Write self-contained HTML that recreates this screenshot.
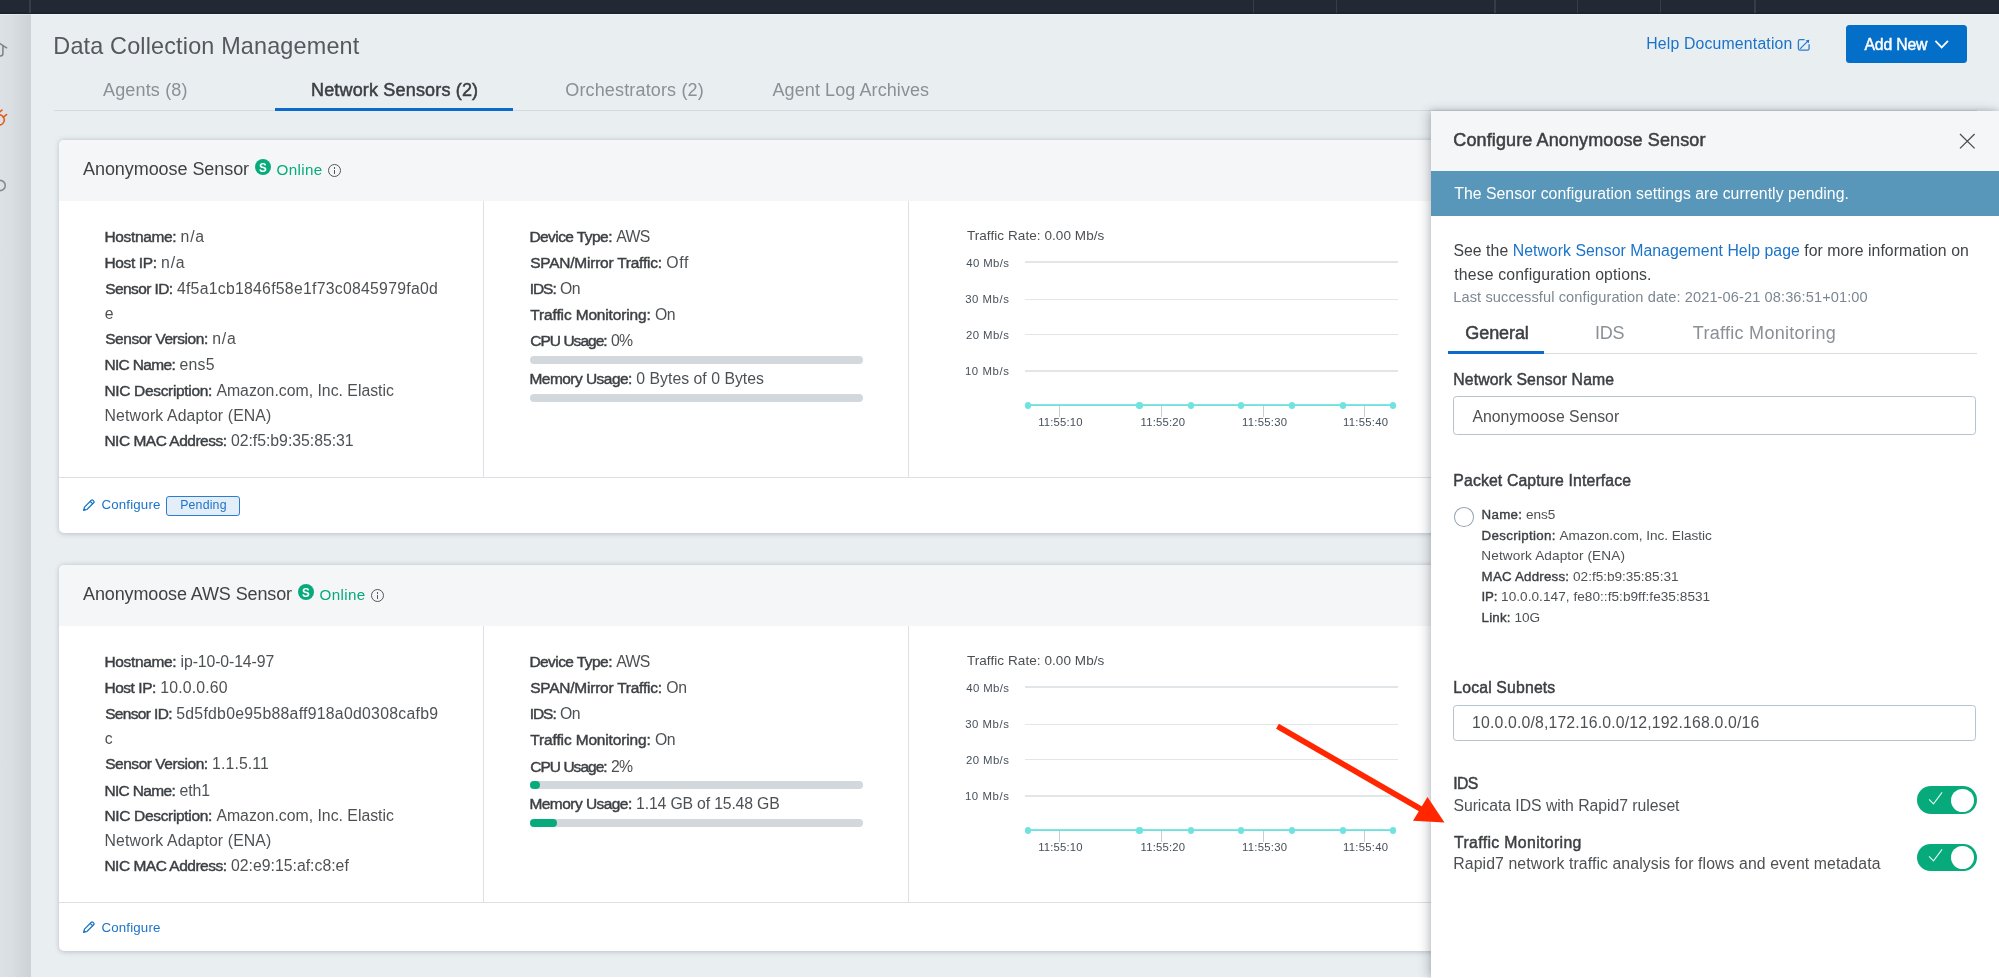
<!DOCTYPE html>
<html lang="en"><head><meta charset="utf-8"><title>Data Collection Management</title>
<style>
html,body{margin:0;padding:0}
body{width:1999px;height:978px;overflow:hidden;position:relative;background:#e9eef1;font-family:"Liberation Sans", sans-serif;}
.txt{position:absolute;left:0;top:0;width:1999px;height:978px;will-change:transform}
.t{position:absolute;white-space:nowrap}
.t b,.m{font-weight:normal;color:#3c3f43;-webkit-text-stroke:.029em #3c3f43}
.t b{font-size:98%}
.w{-webkit-text-stroke:.029em #fff}

</style></head><body>
<div class="shape">
<div style="position:absolute;left:0;top:0;width:1999px;height:13.5px;background:linear-gradient(#222934 0,#222934 11.6px,#1c222e 12.4px,#1c222e 100%)"></div>
<div style="position:absolute;left:30.6px;top:13.6px;width:1999px;height:1.3px;background:#f1f4f6"></div>
<div style="position:absolute;left:29.2px;top:0;width:1.6px;height:13px;background:#353d4a"></div>
<div style="position:absolute;left:1252.8px;top:0;width:1.6px;height:13px;background:#353d4a"></div>
<div style="position:absolute;left:1335.9px;top:0;width:1.6px;height:13px;background:#353d4a"></div>
<div style="position:absolute;left:1494.2px;top:0;width:1.6px;height:13px;background:#353d4a"></div>
<div style="position:absolute;left:1576.9px;top:0;width:1.6px;height:13px;background:#353d4a"></div>
<div style="position:absolute;left:1659.6000000000001px;top:0;width:1.6px;height:13px;background:#353d4a"></div>
<div style="position:absolute;left:1754.4px;top:0;width:1.6px;height:13px;background:#353d4a"></div>
<div style="position:absolute;left:0;top:13.5px;width:30.7px;height:965px;background:linear-gradient(90deg,#dbe1e4 0%,#d8dee1 38%,#d2d8db 66%,#cdd2d6 100%)"></div>
<div style="position:absolute;left:0;top:13.6px;width:30.7px;height:1.3px;background:rgba(255,255,255,.35)"></div>
<svg style="position:absolute;left:0;top:36px" width="12" height="26" viewBox="0 36 12 26"><path d="M-1.2 42.9 L6.6 47.8 M2.9 45.6 V53.4 Q2.9 55.9 0.4 55.9 H-1" fill="none" stroke="#7d838a" stroke-width="1.55" stroke-linecap="round"/></svg>
<svg style="position:absolute;left:0;top:104px" width="12" height="26" viewBox="0 104 12 26"><path d="M-1 112.5 L1.9 110.1 M-1.5 114.9 A5.06 5.06 0 1 1 -1.5 124.9 M3.1 117.3 L6.5 114.6" fill="none" stroke="#e8591c" stroke-width="1.6" stroke-linecap="round"/></svg>
<svg style="position:absolute;left:0;top:174px" width="12" height="24" viewBox="0 174 12 24"><circle cx="0.1" cy="185.5" r="5.15" fill="none" stroke="#858b92" stroke-width="1.6"/></svg>
<div style="position:absolute;left:0;top:976.9px;width:1999px;height:1.2px;background:#fff"></div>
<svg style="position:absolute;left:1794px;top:34px" width="20" height="20" viewBox="1794 34 20 20"><path d="M1804.1 39.7 H1800 Q1798.4 39.7 1798.4 41.3 V48.6 Q1798.4 50.2 1800 50.2 H1807.5 Q1809.1 50.2 1809.1 48.6 V44.7 M1800.5 48.4 L1807.6 41.4" fill="none" stroke="#2a7ccf" stroke-width="1.3" stroke-linecap="round"/><path d="M1809.3 39.8 L1805.7 40.5 L1808.7 43.3 Z" fill="#1a6fc6"/></svg>
<div style="position:absolute;left:1845.6px;top:25px;width:121.4px;height:38.4px;border-radius:3.5px;background:#036fc9"></div>
<svg style="position:absolute;left:1933px;top:38px" width="18" height="12" viewBox="0 0 18 12"><path d="M2.4 2.8 L8.7 9.4 L15 2.8" fill="none" stroke="#fff" stroke-width="1.7"/></svg>
<div style="position:absolute;left:54px;top:109.7px;width:1922.5px;height:1px;background:#d4dade"></div>
<div style="position:absolute;left:275px;top:107.7px;width:238.3px;height:3.3px;background:#0b6bcb"></div>
<div style="position:absolute;left:59.1px;top:139.5px;width:1917.4px;height:393.0px;background:#fff;border-radius:5px;box-shadow:0 .6px 5px rgba(50,65,80,.26)"></div>
<div style="position:absolute;left:59.1px;top:139.5px;width:1917.4px;height:61.0px;background:#f5f6f8;border-radius:5px 5px 0 0"></div>
<div style="position:absolute;left:59.1px;top:477.0px;width:1917.4px;height:1px;background:#dde1e6"></div>
<div style="position:absolute;left:482.75px;top:200.5px;width:1px;height:277.0px;background:#dde1e6"></div>
<div style="position:absolute;left:907.75px;top:200.5px;width:1px;height:277.0px;background:#dde1e6"></div>
<div style="position:absolute;left:254.7px;top:158.9px;width:16.1px;height:16.1px;border-radius:50%;background:#07ab7b"></div>
<div style="position:absolute;left:328.0px;top:163.8px;width:11.4px;height:11.4px;border-radius:50%;border:1.1px solid #50575f"></div>
<div style="position:absolute;left:334.3px;top:169.6px;width:1.1px;height:4.6px;background:#50575f"></div>
<div style="position:absolute;left:334.2px;top:167.3px;width:1.3px;height:1.3px;background:#50575f"></div>
<div style="position:absolute;left:530px;top:356.25px;width:332.5px;height:7.9px;border-radius:4px;background:#d3d8dc"></div>
<div style="position:absolute;left:530px;top:393.75px;width:332.5px;height:7.9px;border-radius:4px;background:#d3d8dc"></div>
<div style="position:absolute;left:1025px;top:261.3px;width:372.5px;height:1.4px;background:#e2e6e9"></div>
<div style="position:absolute;left:1025px;top:298.55px;width:372.5px;height:1.4px;background:#e2e6e9"></div>
<div style="position:absolute;left:1025px;top:333.8px;width:372.5px;height:1.4px;background:#e2e6e9"></div>
<div style="position:absolute;left:1025px;top:370.3px;width:372.5px;height:1.4px;background:#e2e6e9"></div>
<div style="position:absolute;left:1059.0px;top:405.5px;width:1px;height:11.4px;background:#c9cdd2"></div>
<div style="position:absolute;left:1161.25px;top:405.5px;width:1px;height:11.4px;background:#c9cdd2"></div>
<div style="position:absolute;left:1262.75px;top:405.5px;width:1px;height:11.4px;background:#c9cdd2"></div>
<div style="position:absolute;left:1363.75px;top:405.5px;width:1px;height:11.4px;background:#c9cdd2"></div>
<div style="position:absolute;left:1028px;top:404.1px;width:365px;height:2.1px;background:linear-gradient(#9eece9,#6ee1dd 45%,#6ee1dd)"></div>
<div style="position:absolute;left:1025.05px;top:402.3px;width:6.4px;height:6.4px;border-radius:50%;background:#6ee3df"></div>
<div style="position:absolute;left:1136.3px;top:402.3px;width:6.4px;height:6.4px;border-radius:50%;background:#6ee3df"></div>
<div style="position:absolute;left:1187.55px;top:402.3px;width:6.4px;height:6.4px;border-radius:50%;background:#6ee3df"></div>
<div style="position:absolute;left:1237.55px;top:402.3px;width:6.4px;height:6.4px;border-radius:50%;background:#6ee3df"></div>
<div style="position:absolute;left:1288.55px;top:402.3px;width:6.4px;height:6.4px;border-radius:50%;background:#6ee3df"></div>
<div style="position:absolute;left:1339.55px;top:402.3px;width:6.4px;height:6.4px;border-radius:50%;background:#6ee3df"></div>
<div style="position:absolute;left:1389.55px;top:402.3px;width:6.4px;height:6.4px;border-radius:50%;background:#6ee3df"></div>
<svg style="position:absolute;left:82px;top:498.15px" width="14" height="14" viewBox="0 0 14 14"><path d="M1.6 12.4 L2.5 9.1 L9.3 2.3 Q10.1 1.5 10.9 2.3 L11.7 3.1 Q12.5 3.9 11.7 4.7 L4.9 11.5 Z M8.2 3.4 L10.6 5.8" fill="none" stroke="#1a73c9" stroke-width="1.25" stroke-linejoin="round"/><path d="M1.6 12.4 L2.3 9.9 L4.1 11.7 Z" fill="#1a73c9"/></svg>
<div style="position:absolute;left:165.75px;top:495.75px;width:74px;height:20px;box-sizing:border-box;border:1.2px solid #2c7dd0;border-radius:3px;background:#e4eef9"></div>
<div style="position:absolute;left:59.1px;top:564.5px;width:1917.4px;height:386.5px;background:#fff;border-radius:5px;box-shadow:0 .6px 5px rgba(50,65,80,.26)"></div>
<div style="position:absolute;left:59.1px;top:564.5px;width:1917.4px;height:61.0px;background:#f5f6f8;border-radius:5px 5px 0 0"></div>
<div style="position:absolute;left:59.1px;top:902.0px;width:1917.4px;height:1px;background:#dde1e6"></div>
<div style="position:absolute;left:482.75px;top:625.5px;width:1px;height:277.0px;background:#dde1e6"></div>
<div style="position:absolute;left:907.75px;top:625.5px;width:1px;height:277.0px;background:#dde1e6"></div>
<div style="position:absolute;left:297.7px;top:583.9px;width:16.1px;height:16.1px;border-radius:50%;background:#07ab7b"></div>
<div style="position:absolute;left:371.0px;top:588.8px;width:11.4px;height:11.4px;border-radius:50%;border:1.1px solid #50575f"></div>
<div style="position:absolute;left:377.3px;top:594.6px;width:1.1px;height:4.6px;background:#50575f"></div>
<div style="position:absolute;left:377.2px;top:592.3px;width:1.3px;height:1.3px;background:#50575f"></div>
<div style="position:absolute;left:530px;top:781.25px;width:332.5px;height:7.9px;border-radius:4px;background:#d3d8dc"></div>
<div style="position:absolute;left:530px;top:781.25px;width:10px;height:7.9px;border-radius:4px;background:#07ab7b"></div>
<div style="position:absolute;left:530px;top:818.75px;width:332.5px;height:7.9px;border-radius:4px;background:#d3d8dc"></div>
<div style="position:absolute;left:530px;top:818.75px;width:26.75px;height:7.9px;border-radius:4px;background:#07ab7b"></div>
<div style="position:absolute;left:1025px;top:686.3px;width:372.5px;height:1.4px;background:#e2e6e9"></div>
<div style="position:absolute;left:1025px;top:723.55px;width:372.5px;height:1.4px;background:#e2e6e9"></div>
<div style="position:absolute;left:1025px;top:758.8px;width:372.5px;height:1.4px;background:#e2e6e9"></div>
<div style="position:absolute;left:1025px;top:795.3px;width:372.5px;height:1.4px;background:#e2e6e9"></div>
<div style="position:absolute;left:1059.0px;top:830.5px;width:1px;height:11.4px;background:#c9cdd2"></div>
<div style="position:absolute;left:1161.25px;top:830.5px;width:1px;height:11.4px;background:#c9cdd2"></div>
<div style="position:absolute;left:1262.75px;top:830.5px;width:1px;height:11.4px;background:#c9cdd2"></div>
<div style="position:absolute;left:1363.75px;top:830.5px;width:1px;height:11.4px;background:#c9cdd2"></div>
<div style="position:absolute;left:1028px;top:829.1px;width:365px;height:2.1px;background:linear-gradient(#9eece9,#6ee1dd 45%,#6ee1dd)"></div>
<div style="position:absolute;left:1025.05px;top:827.3px;width:6.4px;height:6.4px;border-radius:50%;background:#6ee3df"></div>
<div style="position:absolute;left:1136.3px;top:827.3px;width:6.4px;height:6.4px;border-radius:50%;background:#6ee3df"></div>
<div style="position:absolute;left:1187.55px;top:827.3px;width:6.4px;height:6.4px;border-radius:50%;background:#6ee3df"></div>
<div style="position:absolute;left:1237.55px;top:827.3px;width:6.4px;height:6.4px;border-radius:50%;background:#6ee3df"></div>
<div style="position:absolute;left:1288.55px;top:827.3px;width:6.4px;height:6.4px;border-radius:50%;background:#6ee3df"></div>
<div style="position:absolute;left:1339.55px;top:827.3px;width:6.4px;height:6.4px;border-radius:50%;background:#6ee3df"></div>
<div style="position:absolute;left:1389.55px;top:827.3px;width:6.4px;height:6.4px;border-radius:50%;background:#6ee3df"></div>
<svg style="position:absolute;left:82px;top:920.4px" width="14" height="14" viewBox="0 0 14 14"><path d="M1.6 12.4 L2.5 9.1 L9.3 2.3 Q10.1 1.5 10.9 2.3 L11.7 3.1 Q12.5 3.9 11.7 4.7 L4.9 11.5 Z M8.2 3.4 L10.6 5.8" fill="none" stroke="#1a73c9" stroke-width="1.25" stroke-linejoin="round"/><path d="M1.6 12.4 L2.3 9.9 L4.1 11.7 Z" fill="#1a73c9"/></svg>
<div style="position:absolute;left:1431px;top:111px;width:568px;height:867px;background:#fff;box-shadow:-3px 0 10px rgba(40,50,60,.24),0 -1px 5px rgba(40,50,60,.13)"></div>
<div style="position:absolute;left:1431px;top:111px;width:568px;height:60px;background:#f5f6f8"></div>
<div style="position:absolute;left:1431px;top:171px;width:568px;height:44.5px;background:#5897b9"></div>
<svg style="position:absolute;left:1957px;top:131px" width="20" height="20" viewBox="0 0 20 20"><path d="M3 3 L17.6 17.4 M17.6 3 L3 17.4" stroke="#484d53" stroke-width="1.25" fill="none"/></svg>
<div style="position:absolute;left:1447.5px;top:353.2px;width:529px;height:1px;background:#d9dee2"></div>
<div style="position:absolute;left:1447.5px;top:351.3px;width:96.5px;height:3.2px;background:#0b6bcb"></div>
<div style="position:absolute;left:1453.2px;top:396.4px;width:523.2px;height:38.6px;box-sizing:border-box;border:1.2px solid #b4c3d0;border-radius:3.5px;background:#fff"></div>
<div style="position:absolute;left:1453.75px;top:507px;width:20px;height:19.6px;box-sizing:border-box;border:1px solid #93a3b3;border-radius:50%;background:#fff"></div>
<div style="position:absolute;left:1453.2px;top:705.2px;width:523.2px;height:35.6px;box-sizing:border-box;border:1.2px solid #b4c3d0;border-radius:3.5px;background:#fff"></div>
<div style="position:absolute;left:1916.6px;top:786.2px;width:60px;height:27.7px;border-radius:14px;background:#07ab7b"></div>
<div style="position:absolute;left:1951px;top:788.9px;width:22.8px;height:22.8px;border-radius:50%;background:#fff"></div>
<svg style="position:absolute;left:1925px;top:790.5px" width="20" height="18" viewBox="0 0 20 18"><path d="M4.1 8.3 L8.5 12.9 L17.1 1.4" stroke="#fff" stroke-opacity=".88" stroke-width="1.15" fill="none"/></svg>
<div style="position:absolute;left:1916.6px;top:843.7px;width:60px;height:27.7px;border-radius:14px;background:#07ab7b"></div>
<div style="position:absolute;left:1951px;top:846.4px;width:22.8px;height:22.8px;border-radius:50%;background:#fff"></div>
<svg style="position:absolute;left:1925px;top:848px" width="20" height="18" viewBox="0 0 20 18"><path d="M4.1 8.3 L8.5 12.9 L17.1 1.4" stroke="#fff" stroke-opacity=".88" stroke-width="1.15" fill="none"/></svg>
<svg style="position:absolute;left:1260px;top:710px" width="200" height="130" viewBox="1260 710 200 130"><path d="M1277.5 726.25 L1422 809.8" stroke="#ff2600" stroke-width="5.7" fill="none"/><path d="M1444.5 822.5 L1427.5 797 L1413 820.75 Z" fill="#ff2600"/></svg>
</div>
<div class="txt">
<div class="t" style="left:53.37px;top:30px;line-height:32px;height:32px;font-size:23.4px;color:#55585c;letter-spacing:0.169px;">Data Collection Management</div>
<div class="t" style="left:1646.13px;top:32px;line-height:23px;height:23px;font-size:15.8px;color:#1a73c9;letter-spacing:0.183px;">Help Documentation</div>
<div class="t w" style="left:1864.52px;top:33px;line-height:23px;height:23px;font-size:15.8px;color:#fff;letter-spacing:-0.191px;">Add New</div>
<div class="t" style="left:103.01px;top:77px;line-height:26px;height:26px;font-size:18.0px;color:#8a9096;letter-spacing:0.166px;">Agents (8)</div>
<div class="t m" style="left:310.97px;top:77px;line-height:26px;height:26px;font-size:18.0px;color:#3c3f43;letter-spacing:0.171px;">Network Sensors (2)</div>
<div class="t" style="left:565.26px;top:77px;line-height:26px;height:26px;font-size:18.0px;color:#8a9096;letter-spacing:0.153px;">Orchestrators (2)</div>
<div class="t" style="left:772.51px;top:77px;line-height:26px;height:26px;font-size:18.0px;color:#8a9096;letter-spacing:0.088px;">Agent Log Archives</div>
<div class="t" style="left:83.01px;top:156px;line-height:26px;height:26px;font-size:18.0px;color:#404346;letter-spacing:-0.062px;">Anonymoose Sensor</div>
<div class="t w" style="left:258.50px;top:157px;line-height:21px;height:21px;font-size:13.2px;color:#fff;font-weight:bold;-webkit-text-stroke:0;transform:scaleX(.88);transform-origin:0 0;">S</div>
<div class="t" style="left:276.60px;top:158px;line-height:23px;height:23px;font-size:15.2px;color:#07ab7b;letter-spacing:0.341px;">Online</div>
<div class="t" style="left:104.45px;top:225px;line-height:23px;height:23px;font-size:15.8px;color:#4e5154;"><b style="letter-spacing:-0.342px">Hostname:</b> <span class="v" style="letter-spacing:0.800px">n/a</span></div>
<div class="t" style="left:104.45px;top:251px;line-height:23px;height:23px;font-size:15.8px;color:#4e5154;"><b style="letter-spacing:-0.348px">Host IP:</b> <span class="v" style="letter-spacing:0.800px">n/a</span></div>
<div class="t" style="left:105.20px;top:277px;line-height:23px;height:23px;font-size:15.8px;color:#4e5154;"><b style="letter-spacing:-0.576px">Sensor ID:</b> <span class="v" style="letter-spacing:0.263px">4f5a1cb1846f58e1f73c0845979fa0d</span></div>
<div class="t" style="left:104.65px;top:302px;line-height:23px;height:23px;font-size:15.8px;color:#4e5154;"><span class="v">e</span></div>
<div class="t" style="left:105.20px;top:327px;line-height:23px;height:23px;font-size:15.8px;color:#4e5154;"><b style="letter-spacing:-0.442px">Sensor Version:</b> <span class="v" style="letter-spacing:0.800px">n/a</span></div>
<div class="t" style="left:104.44px;top:353px;line-height:23px;height:23px;font-size:15.8px;color:#4e5154;"><b style="letter-spacing:-0.655px">NIC Name:</b> <span class="v" style="letter-spacing:0.301px">ens5</span></div>
<div class="t" style="left:104.44px;top:379px;line-height:23px;height:23px;font-size:15.8px;color:#4e5154;"><b style="letter-spacing:-0.316px">NIC Description:</b> <span class="v" style="letter-spacing:0.009px">Amazon.com, Inc. Elastic</span></div>
<div class="t" style="left:104.57px;top:404px;line-height:23px;height:23px;font-size:15.8px;color:#4e5154;letter-spacing:0.128px;"><span class="v">Network Adaptor (ENA)</span></div>
<div class="t" style="left:104.44px;top:429px;line-height:23px;height:23px;font-size:15.8px;color:#4e5154;"><b style="letter-spacing:-0.484px">NIC MAC Address:</b> <span class="v" style="letter-spacing:-0.013px">02:f5:b9:35:85:31</span></div>
<div class="t" style="left:529.45px;top:225px;line-height:23px;height:23px;font-size:15.8px;color:#4e5154;"><b style="letter-spacing:-0.558px">Device Type:</b> <span class="v" style="letter-spacing:-0.750px">AWS</span></div>
<div class="t" style="left:530.20px;top:251px;line-height:23px;height:23px;font-size:15.8px;color:#4e5154;"><b style="letter-spacing:-0.225px">SPAN/Mirror Traffic:</b> <span class="v" style="letter-spacing:0.680px">Off</span></div>
<div class="t" style="left:529.64px;top:277px;line-height:23px;height:23px;font-size:15.8px;color:#4e5154;"><b style="letter-spacing:-1.000px">IDS:</b> <span class="v" style="letter-spacing:-0.750px">On</span></div>
<div class="t" style="left:530.36px;top:303px;line-height:23px;height:23px;font-size:15.8px;color:#4e5154;"><b style="letter-spacing:-0.141px">Traffic Monitoring:</b> <span class="v" style="letter-spacing:-0.559px">On</span></div>
<div class="t" style="left:530.29px;top:329px;line-height:23px;height:23px;font-size:15.8px;color:#4e5154;"><b style="letter-spacing:-0.959px">CPU Usage:</b> <span class="v" style="letter-spacing:-0.750px">0%</span></div>
<div class="t" style="left:529.44px;top:367px;line-height:23px;height:23px;font-size:15.8px;color:#4e5154;"><b style="letter-spacing:-0.519px">Memory Usage:</b> <span class="v" style="letter-spacing:0.024px">0 Bytes of 0 Bytes</span></div>
<div class="t" style="left:966.91px;top:225px;line-height:21px;height:21px;font-size:13.5px;color:#4c4f52;letter-spacing:0.073px;">Traffic Rate: 0.00 Mb/s</div>
<div class="t" style="left:966.30px;top:254px;line-height:18px;height:18px;font-size:11.4px;color:#47505a;letter-spacing:0.337px;">40 Mb/s</div>
<div class="t" style="left:965.25px;top:290px;line-height:18px;height:18px;font-size:11.4px;color:#47505a;letter-spacing:0.512px;">30 Mb/s</div>
<div class="t" style="left:966.09px;top:326px;line-height:18px;height:18px;font-size:11.4px;color:#47505a;letter-spacing:0.372px;">20 Mb/s</div>
<div class="t" style="left:964.90px;top:362px;line-height:18px;height:18px;font-size:11.4px;color:#47505a;letter-spacing:0.569px;">10 Mb/s</div>
<div class="t" style="left:1038.21px;top:413px;line-height:18px;height:18px;font-size:11.3px;color:#47505a;letter-spacing:0.176px;">11:55:10</div>
<div class="t" style="left:1140.55px;top:413px;line-height:18px;height:18px;font-size:11.3px;color:#47505a;letter-spacing:0.180px;">11:55:20</div>
<div class="t" style="left:1241.92px;top:413px;line-height:18px;height:18px;font-size:11.3px;color:#47505a;letter-spacing:0.289px;">11:55:30</div>
<div class="t" style="left:1342.92px;top:413px;line-height:18px;height:18px;font-size:11.3px;color:#47505a;letter-spacing:0.289px;">11:55:40</div>
<div class="t" style="left:101.38px;top:494px;line-height:21px;height:21px;font-size:13.3px;color:#1a73c9;letter-spacing:0.173px;">Configure</div>
<div class="t" style="left:180.20px;top:495px;line-height:20px;height:20px;font-size:12.3px;color:#1a73c9;letter-spacing:0.194px;">Pending</div>
<div class="t" style="left:83.01px;top:581px;line-height:26px;height:26px;font-size:18.0px;color:#404346;letter-spacing:-0.118px;">Anonymoose AWS Sensor</div>
<div class="t w" style="left:301.50px;top:582px;line-height:21px;height:21px;font-size:13.2px;color:#fff;font-weight:bold;-webkit-text-stroke:0;transform:scaleX(.88);transform-origin:0 0;">S</div>
<div class="t" style="left:319.60px;top:583px;line-height:23px;height:23px;font-size:15.2px;color:#07ab7b;letter-spacing:0.341px;">Online</div>
<div class="t" style="left:104.45px;top:650px;line-height:23px;height:23px;font-size:15.8px;color:#4e5154;"><b style="letter-spacing:-0.340px">Hostname:</b> <span class="v" style="letter-spacing:-0.103px">ip-10-0-14-97</span></div>
<div class="t" style="left:104.45px;top:676px;line-height:23px;height:23px;font-size:15.8px;color:#4e5154;"><b style="letter-spacing:-0.445px">Host IP:</b> <span class="v" style="letter-spacing:0.158px">10.0.0.60</span></div>
<div class="t" style="left:105.20px;top:702px;line-height:23px;height:23px;font-size:15.8px;color:#4e5154;"><b style="letter-spacing:-0.645px">Sensor ID:</b> <span class="v" style="letter-spacing:0.273px">5d5fdb0e95b88aff918a0d0308cafb9</span></div>
<div class="t" style="left:104.66px;top:727px;line-height:23px;height:23px;font-size:15.8px;color:#4e5154;"><span class="v">c</span></div>
<div class="t" style="left:105.20px;top:752px;line-height:23px;height:23px;font-size:15.8px;color:#4e5154;"><b style="letter-spacing:-0.451px">Sensor Version:</b> <span class="v" style="letter-spacing:0.134px">1.1.5.11</span></div>
<div class="t" style="left:104.44px;top:779px;line-height:23px;height:23px;font-size:15.8px;color:#4e5154;"><b style="letter-spacing:-0.655px">NIC Name:</b> <span class="v" style="letter-spacing:-0.017px">eth1</span></div>
<div class="t" style="left:104.44px;top:804px;line-height:23px;height:23px;font-size:15.8px;color:#4e5154;"><b style="letter-spacing:-0.316px">NIC Description:</b> <span class="v" style="letter-spacing:0.009px">Amazon.com, Inc. Elastic</span></div>
<div class="t" style="left:104.57px;top:829px;line-height:23px;height:23px;font-size:15.8px;color:#4e5154;letter-spacing:0.128px;"><span class="v">Network Adaptor (ENA)</span></div>
<div class="t" style="left:104.44px;top:854px;line-height:23px;height:23px;font-size:15.8px;color:#4e5154;"><b style="letter-spacing:-0.484px">NIC MAC Address:</b> <span class="v" style="letter-spacing:0.012px">02:e9:15:af:c8:ef</span></div>
<div class="t" style="left:529.45px;top:650px;line-height:23px;height:23px;font-size:15.8px;color:#4e5154;"><b style="letter-spacing:-0.558px">Device Type:</b> <span class="v" style="letter-spacing:-0.750px">AWS</span></div>
<div class="t" style="left:530.20px;top:676px;line-height:23px;height:23px;font-size:15.8px;color:#4e5154;"><b style="letter-spacing:-0.225px">SPAN/Mirror Traffic:</b> <span class="v" style="letter-spacing:-0.320px">On</span></div>
<div class="t" style="left:529.64px;top:702px;line-height:23px;height:23px;font-size:15.8px;color:#4e5154;"><b style="letter-spacing:-1.000px">IDS:</b> <span class="v" style="letter-spacing:-0.750px">On</span></div>
<div class="t" style="left:530.36px;top:728px;line-height:23px;height:23px;font-size:15.8px;color:#4e5154;"><b style="letter-spacing:-0.141px">Traffic Monitoring:</b> <span class="v" style="letter-spacing:-0.559px">On</span></div>
<div class="t" style="left:530.29px;top:755px;line-height:23px;height:23px;font-size:15.8px;color:#4e5154;"><b style="letter-spacing:-0.961px">CPU Usage:</b> <span class="v" style="letter-spacing:-0.750px">2%</span></div>
<div class="t" style="left:529.44px;top:792px;line-height:23px;height:23px;font-size:15.8px;color:#4e5154;"><b style="letter-spacing:-0.531px">Memory Usage:</b> <span class="v" style="letter-spacing:-0.170px">1.14 GB of 15.48 GB</span></div>
<div class="t" style="left:966.91px;top:650px;line-height:21px;height:21px;font-size:13.5px;color:#4c4f52;letter-spacing:0.073px;">Traffic Rate: 0.00 Mb/s</div>
<div class="t" style="left:966.30px;top:679px;line-height:18px;height:18px;font-size:11.4px;color:#47505a;letter-spacing:0.337px;">40 Mb/s</div>
<div class="t" style="left:965.25px;top:715px;line-height:18px;height:18px;font-size:11.4px;color:#47505a;letter-spacing:0.512px;">30 Mb/s</div>
<div class="t" style="left:966.09px;top:751px;line-height:18px;height:18px;font-size:11.4px;color:#47505a;letter-spacing:0.372px;">20 Mb/s</div>
<div class="t" style="left:964.90px;top:787px;line-height:18px;height:18px;font-size:11.4px;color:#47505a;letter-spacing:0.569px;">10 Mb/s</div>
<div class="t" style="left:1038.21px;top:838px;line-height:18px;height:18px;font-size:11.3px;color:#47505a;letter-spacing:0.176px;">11:55:10</div>
<div class="t" style="left:1140.55px;top:838px;line-height:18px;height:18px;font-size:11.3px;color:#47505a;letter-spacing:0.180px;">11:55:20</div>
<div class="t" style="left:1241.92px;top:838px;line-height:18px;height:18px;font-size:11.3px;color:#47505a;letter-spacing:0.289px;">11:55:30</div>
<div class="t" style="left:1342.92px;top:838px;line-height:18px;height:18px;font-size:11.3px;color:#47505a;letter-spacing:0.289px;">11:55:40</div>
<div class="t" style="left:101.38px;top:917px;line-height:21px;height:21px;font-size:13.3px;color:#1a73c9;letter-spacing:0.173px;">Configure</div>
<div class="t m" style="left:1453.35px;top:127px;line-height:26px;height:26px;font-size:18.0px;color:#3c3f43;letter-spacing:0.114px;">Configure Anonymoose Sensor</div>
<div class="t" style="left:1454.19px;top:182px;line-height:23px;height:23px;font-size:15.8px;color:#fff;letter-spacing:0.040px;">The Sensor configuration settings are currently pending.</div>
<div class="t" style="left:1453.41px;top:239px;line-height:23px;height:23px;font-size:15.8px;color:#404346;letter-spacing:0.052px;">See the <span style="color:#1a73c9">Network Sensor Management Help page</span> for more information on</div>
<div class="t" style="left:1454.26px;top:263px;line-height:23px;height:23px;font-size:15.8px;color:#404346;letter-spacing:0.150px;">these configuration options.</div>
<div class="t" style="left:1453.29px;top:286px;line-height:22px;height:22px;font-size:14.6px;color:#7d8791;letter-spacing:0.098px;">Last successful configuration date: 2021-06-21 08:36:51+01:00</div>
<div class="t m" style="left:1465.32px;top:320px;line-height:26px;height:26px;font-size:18.0px;color:#3c3f43;letter-spacing:-0.092px;">General</div>
<div class="t" style="left:1594.95px;top:320px;line-height:26px;height:26px;font-size:18.0px;color:#8a9096;letter-spacing:-0.210px;">IDS</div>
<div class="t" style="left:1692.78px;top:320px;line-height:26px;height:26px;font-size:18.0px;color:#8a9096;letter-spacing:0.291px;">Traffic Monitoring</div>
<div class="t m" style="left:1453.30px;top:368px;line-height:23px;height:23px;font-size:15.8px;color:#3c3f43;letter-spacing:0.104px;">Network Sensor Name</div>
<div class="t" style="left:1472.52px;top:405px;line-height:23px;height:23px;font-size:15.8px;color:#4e5154;">Anonymoose Sensor</div>
<div class="t m" style="left:1453.30px;top:469px;line-height:23px;height:23px;font-size:15.8px;color:#3c3f43;letter-spacing:0.131px;">Packet Capture Interface</div>
<div class="t" style="left:1481.60px;top:504px;line-height:21px;height:21px;font-size:13.6px;color:#4e5154;"><b style="letter-spacing:0.286px">Name:</b> <span class="v" style="letter-spacing:-0.056px">ens5</span></div>
<div class="t" style="left:1481.59px;top:525px;line-height:21px;height:21px;font-size:13.6px;color:#4e5154;"><b style="letter-spacing:0.320px">Description:</b> <span class="v" style="letter-spacing:-0.012px">Amazon.com, Inc. Elastic</span></div>
<div class="t" style="left:1481.32px;top:545px;line-height:21px;height:21px;font-size:13.6px;color:#4e5154;letter-spacing:0.118px;"><span class="v">Network Adaptor (ENA)</span></div>
<div class="t" style="left:1481.60px;top:566px;line-height:21px;height:21px;font-size:13.6px;color:#4e5154;"><b style="letter-spacing:0.217px">MAC Address:</b> <span class="v" style="letter-spacing:-0.025px">02:f5:b9:35:85:31</span></div>
<div class="t" style="left:1481.42px;top:586px;line-height:21px;height:21px;font-size:13.6px;color:#4e5154;"><b style="letter-spacing:-0.148px">IP:</b> <span class="v" style="letter-spacing:0.045px">10.0.0.147, fe80::f5:b9ff:fe35:8531</span></div>
<div class="t" style="left:1481.60px;top:607px;line-height:21px;height:21px;font-size:13.6px;color:#4e5154;"><b style="letter-spacing:0.173px">Link:</b> <span class="v" style="letter-spacing:-0.008px">10G</span></div>
<div class="t m" style="left:1453.30px;top:676px;line-height:23px;height:23px;font-size:15.8px;color:#3c3f43;letter-spacing:0.154px;">Local Subnets</div>
<div class="t" style="left:1472.05px;top:711px;line-height:23px;height:23px;font-size:15.8px;color:#4e5154;letter-spacing:0.159px;">10.0.0.0/8,172.16.0.0/12,192.168.0.0/16</div>
<div class="t m" style="left:1453.31px;top:772px;line-height:23px;height:23px;font-size:15.8px;color:#3c3f43;letter-spacing:-0.680px;">IDS</div>
<div class="t" style="left:1453.41px;top:794px;line-height:23px;height:23px;font-size:15.8px;color:#4e5154;letter-spacing:-0.042px;">Suricata IDS with Rapid7 ruleset</div>
<div class="t m" style="left:1454.01px;top:831px;line-height:23px;height:23px;font-size:15.8px;color:#3c3f43;letter-spacing:0.368px;">Traffic Monitoring</div>
<div class="t" style="left:1453.29px;top:852px;line-height:23px;height:23px;font-size:15.8px;color:#4e5154;letter-spacing:0.101px;">Rapid7 network traffic analysis for flows and event metadata</div>
</div>
</body></html>
